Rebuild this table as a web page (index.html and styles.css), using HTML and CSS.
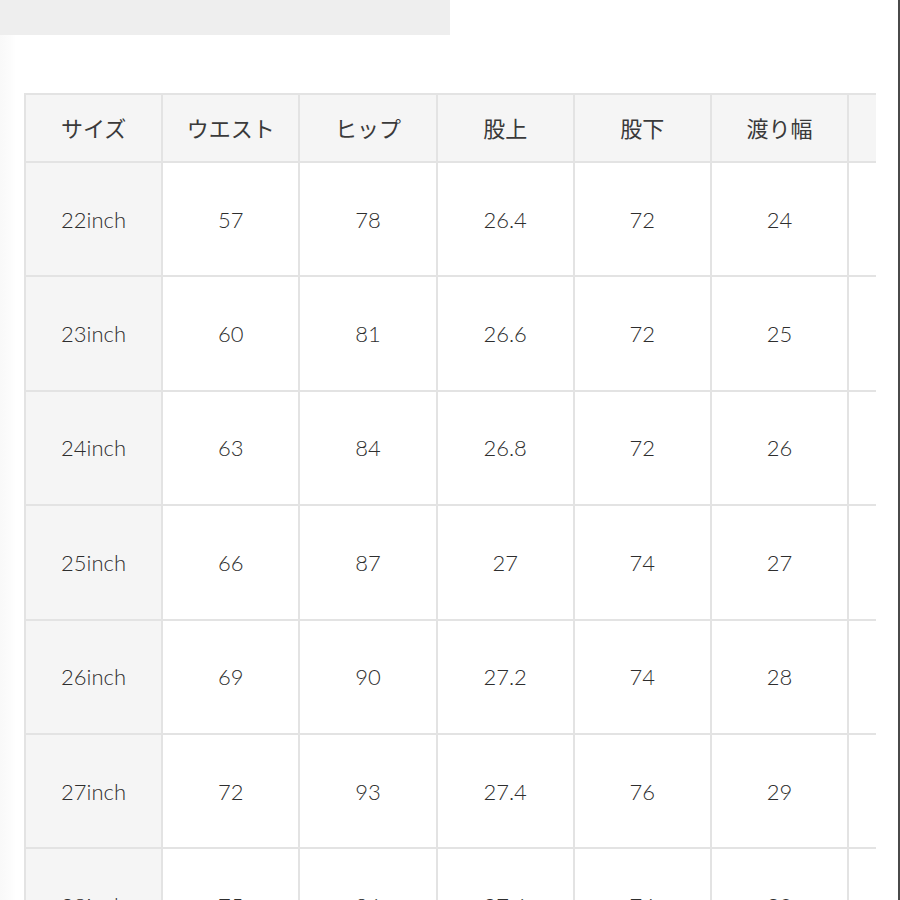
FILE: index.html
```html
<!DOCTYPE html>
<html lang="ja">
<head>
<meta charset="utf-8">
<title>サイズ表</title>
<link rel="stylesheet" href="styles.css">
</head>
<body>
<div class="frame">
  <div class="topbar"></div>
  <div class="scroller">
    <div class="grid">
      <div class="cell head">サイズ</div>
      <div class="cell head">ウエスト</div>
      <div class="cell head">ヒップ</div>
      <div class="cell head">股上</div>
      <div class="cell head">股下</div>
      <div class="cell head">渡り幅</div>
      <div class="cell head"></div>

      <div class="cell size">22inch</div><div class="cell">57</div><div class="cell">78</div><div class="cell">26.4</div><div class="cell">72</div><div class="cell">24</div><div class="cell"></div>
      <div class="cell size">23inch</div><div class="cell">60</div><div class="cell">81</div><div class="cell">26.6</div><div class="cell">72</div><div class="cell">25</div><div class="cell"></div>
      <div class="cell size">24inch</div><div class="cell">63</div><div class="cell">84</div><div class="cell">26.8</div><div class="cell">72</div><div class="cell">26</div><div class="cell"></div>
      <div class="cell size">25inch</div><div class="cell">66</div><div class="cell">87</div><div class="cell">27</div><div class="cell">74</div><div class="cell">27</div><div class="cell"></div>
      <div class="cell size">26inch</div><div class="cell">69</div><div class="cell">90</div><div class="cell">27.2</div><div class="cell">74</div><div class="cell">28</div><div class="cell"></div>
      <div class="cell size">27inch</div><div class="cell">72</div><div class="cell">93</div><div class="cell">27.4</div><div class="cell">76</div><div class="cell">29</div><div class="cell"></div>
      <div class="cell size">28inch</div><div class="cell">75</div><div class="cell">96</div><div class="cell">27.6</div><div class="cell">74</div><div class="cell">30</div><div class="cell"></div>
    </div>
  </div>
</div>
</body>
</html>
```

FILE: styles.css
```css
html, body {
  margin: 0;
  padding: 0;
  background: #ffffff;
}

body {
  font-family: "Lato", "Noto Sans CJK JP", sans-serif;
  color: #3c3c3c;
  overflow: hidden;
}

.frame {
  width: 898px;
  height: 900px;
  border-right: 2px solid #4a4a4a;
  background: linear-gradient(to right, #f9f9f9 0, #fcfcfc 10px, #ffffff 16px);
  overflow: hidden;
}

.topbar {
  width: 450px;
  height: 35px;
  background: #eeeeee;
}

.scroller {
  margin: 58px 0 0 24px;
  width: 852px;
  overflow: hidden;
}

.grid {
  display: grid;
  grid-template-columns: repeat(7, 137.2px);
  grid-template-rows: 68px repeat(7, 114.4px);
  width: max-content;
  border-left: 2px solid #e3e3e3;
  border-top: 2px solid #e3e3e3;
}

.cell {
  box-sizing: border-box;
  border-right: 2px solid #e3e3e3;
  border-bottom: 2px solid #e3e3e3;
  display: flex;
  align-items: center;
  justify-content: center;
  font-size: 22px;
  font-weight: 300;
  color: #2e2e2e;
  background: #ffffff;
}

.head {
  background: #f5f5f5;
  font-family: "Noto Sans CJK JP", sans-serif;
  font-size: 22px;
  font-weight: 400;
  color: #3a3a3a;
  padding-bottom: 3px;
}

.size {
  background: #f5f5f5;
}
```
